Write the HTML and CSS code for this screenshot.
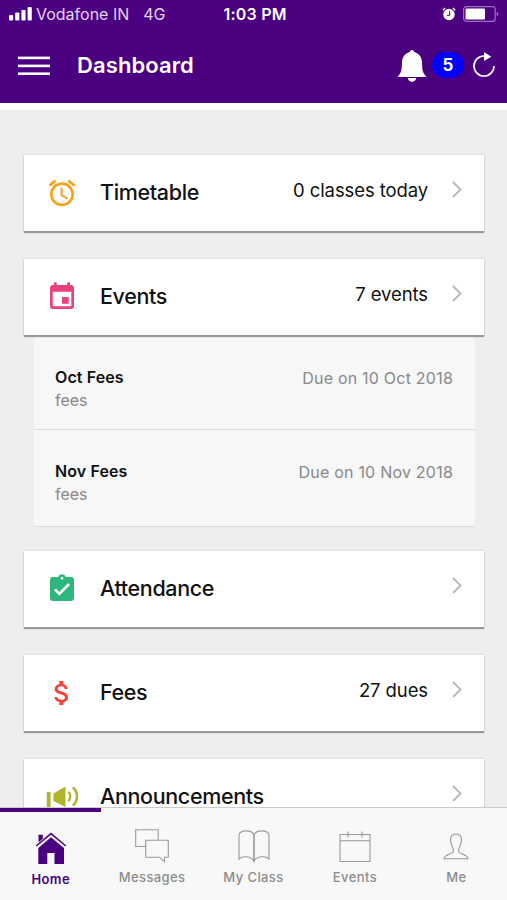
FILE: index.html
```html
<!DOCTYPE html>
<html lang="en">
<head>
  <meta charset="UTF-8">
  <meta name="viewport" content="width=device-width, initial-scale=1.0">
  <title>Dashboard</title>
  <link rel="stylesheet" href="styles.css">
</head>
<body>
  <div class="app">
    <header class="header">
      <div class="status-bar">
        <svg class="signal" viewBox="0 0 23 14" fill="#fff">
          <rect x="0" y="8" width="4.2" height="5.5" rx="1"/>
          <rect x="6.2" y="5.6" width="4.2" height="7.9" rx="1"/>
          <rect x="12.4" y="3" width="4.2" height="10.5" rx="1"/>
          <rect x="18.6" y="0" width="4.2" height="13.5" rx="1"/>
        </svg>
        <span class="carrier">Vodafone IN</span>
        <span class="network">4G</span>
        <span class="time">1:03 PM</span>
        <svg class="alarm" viewBox="0 0 14 14">
          <circle cx="7" cy="7.5" r="5.7" fill="#fff"/>
          <path d="M.8 3.2 3.2 1M13.2 3.2 10.8 1" stroke="#fff" stroke-width="1.4" fill="none"/>
          <path d="M7.6 4.3v4H4.8" stroke="#4b0082" stroke-width="1.1" fill="none"/>
        </svg>
        <svg class="battery" viewBox="0 0 36 16">
          <rect x=".6" y=".6" width="31.6" height="14.8" rx="3" fill="none" stroke="#9a6fbd" stroke-width="1.2"/>
          <rect x="2.5" y="2.5" width="19.5" height="11" rx="1.2" fill="#fff"/>
          <path d="M33.6 5.5Q37 8 33.6 10.5z" fill="#9a6fbd"/>
        </svg>
      </div>
      <div class="toolbar">
        <svg class="menu" viewBox="0 0 32 20" fill="#fff">
          <rect y=".6" width="32" height="2.6"/>
          <rect y="8.6" width="32" height="2.6"/>
          <rect y="16.4" width="32" height="2.6"/>
        </svg>
        <h1>Dashboard</h1>
        <svg class="bell" viewBox="0 0 28 32" fill="#fff">
          <path d="M14 0c1.200 0 1.900.8 2 1.900 5.200 1.300 7.900 5.300 8 10.700.1 7.400.8 10.700 4 13.600v.8H0v-.8c3.200-2.900 3.900-6.200 4-13.600.1-5.400 2.800-9.400 8-10.700.1-1.100.8-1.900 2-1.900z"/>
          <path d="M9.800 28h8.400c-.3 2.200-2 3.700-4.200 3.700S10.100 30.200 9.800 28z"/>
        </svg>
        <span class="badge">5</span>
        <svg class="refresh" viewBox="0 0 22 25">
          <path d="M12.500 4H11A10 10 0 1 0 21 14" fill="none" stroke="#fff" stroke-width="1.7"/>
          <path d="M11 0v9l7.300-4.300z" fill="#fff"/>
        </svg>
      </div>
    </header>

    <main class="content">
      <div class="card">
        <svg class="icon" viewBox="0 0 24 24" fill="#f9a01b">
          <path d="M22 5.720l-4.600-3.860-1.290 1.530 4.600 3.860L22 5.720zM7.880 3.390L6.600 1.860 2 5.710l1.290 1.530 4.590-3.850zM12.500 8H11v6l4.750 2.850.75-1.230-4-2.370V8zM12 4c-4.970 0-9 4.030-9 9s4.020 9 9 9c4.970 0 9-4.030 9-9s-4.030-9-9-9zm0 16c-3.870 0-7-3.130-7-7s3.130-7 7-7 7 3.130 7 7-3.130 7-7 7z"/>
        </svg>
        <h2>Timetable</h2>
        <span class="value">0 classes today</span>
        <svg class="arrow" viewBox="0 0 10 17"><path d="M1 1l7.500 7.500L1 16"/></svg>
      </div>

      <div class="card card-open">
        <svg class="icon" viewBox="0 0 24 24" fill="#ec407a">
          <path d="M17 12h-5v5h5v-5zM16 1v2H8V1H6v2H5c-1.110 0-1.990.9-1.990 2L3 19c0 1.100.89 2 2 2h14c1.100 0 2-.9 2-2V5c0-1.100-.9-2-2-2h-1V1h-2zm3 18H5V8h14v11z"/>
        </svg>
        <h2>Events</h2>
        <span class="value">7 events</span>
        <svg class="arrow" viewBox="0 0 10 17"><path d="M1 1l7.500 7.500L1 16"/></svg>
      </div>
      <ul class="event-list">
        <li>
          <div>
            <h3>Oct Fees</h3>
            <p>fees</p>
          </div>
          <span class="due">Due on 10 Oct 2018</span>
        </li>
        <li>
          <div>
            <h3>Nov Fees</h3>
            <p>fees</p>
          </div>
          <span class="due">Due on 10 Nov 2018</span>
        </li>
      </ul>

      <div class="card">
        <svg class="icon" viewBox="0 0 24 24" fill="#2eb67d">
          <path d="M19 3h-4.180C14.400 1.840 13.300 1 12 1c-1.300 0-2.400.84-2.820 2H5c-1.100 0-2 .9-2 2v14c0 1.100.9 2 2 2h14c1.100 0 2-.9 2-2V5c0-1.100-.9-2-2-2zm-7 0c.55 0 1 .45 1 1s-.45 1-1 1-1-.45-1-1 .45-1 1-1zm-2 14l-4-4 1.410-1.410L10 14.170l6.590-6.590L18 9l-8 8z"/>
        </svg>
        <h2>Attendance</h2>
        <svg class="arrow" viewBox="0 0 10 17"><path d="M1 1l7.500 7.500L1 16"/></svg>
      </div>

      <div class="card">
        <svg class="icon" viewBox="0 0 24 24" fill="#f44336">
          <path d="M11.800 10.900c-2.270-.59-3-1.200-3-2.150 0-1.090 1.010-1.850 2.700-1.850 1.780 0 2.440.85 2.500 2.100h2.210c-.07-1.720-1.120-3.300-3.210-3.810V3h-3v2.160c-1.940.42-3.500 1.680-3.500 3.610 0 2.310 1.910 3.460 4.700 4.130 2.500.6 3 1.480 3 2.410 0 .69-.49 1.790-2.700 1.790-2.060 0-2.870-.92-2.980-2.100h-2.200c.12 2.190 1.760 3.420 3.680 3.830V21h3v-2.150c1.950-.37 3.500-1.500 3.500-3.550 0-2.840-2.430-3.810-4.700-4.400z"/>
        </svg>
        <h2>Fees</h2>
        <span class="value">27 dues</span>
        <svg class="arrow" viewBox="0 0 10 17"><path d="M1 1l7.500 7.500L1 16"/></svg>
      </div>

      <div class="card">
        <svg class="icon" viewBox="0 0 32 32" fill="#afb42b">
          <path d="M.8 11h3.800v18H.8zM7.500 12.500l12-7v20.500l-12-6z"/>
          <path d="M22 11c3 1.500 3 7.500 0 9" fill="none" stroke="#afb42b" stroke-width="2.2"/>
          <path d="M26.800 6.500c5.500 4 5.500 14 0 18" fill="none" stroke="#afb42b" stroke-width="2.5"/>
        </svg>
        <h2>Announcements</h2>
        <svg class="arrow" viewBox="0 0 10 17"><path d="M1 1l7.500 7.500L1 16"/></svg>
      </div>
    </main>

    <nav class="tabs">
      <a class="tab active">
        <svg viewBox="0 0 36 36" fill="#4b0082">
          <path d="M5.500 4.800h4.300v4L5.500 12.300z"/>
          <path d="M18 7.200 31 18V34h-9.500V23h-7.200v11H5.300V18z"/>
          <path d="M3.200 16 18 3.600 32.800 16" fill="none" stroke="#4b0082" stroke-width="1.5"/>
        </svg>
        <span>Home</span>
      </a>
      <a class="tab">
        <svg viewBox="0 0 36 36">
          <path d="M11.500 18.500H1.700V1.800h22.500v10"/>
          <path d="M11.700 12.200h22.600v17h-3.800v4.500l-5-4.500H11.700z"/>
        </svg>
        <span>Messages</span>
      </a>
      <a class="tab">
        <svg viewBox="0 0 36 36">
          <path d="M18 33c-3-5-11-5.500-15-2V7c1-5.500 13-5.500 15 0z"/>
          <path d="M18 33c3-5 11-5.500 15-2V7c-1-5.500-13-5.500-15 0z"/>
        </svg>
        <span>My Class</span>
      </a>
      <a class="tab">
        <svg viewBox="0 0 36 36">
          <path d="M3 6.500h30v27H3zM3 12.800h30M11 3.500v6M25 3.500v6"/>
        </svg>
        <span>Events</span>
      </a>
      <a class="tab">
        <svg viewBox="0 0 36 36">
          <path d="M18 6c-4 0-6 2.500-5.500 7 .3 4 3 6.500 3 9.500 0 4.500-9 3-9.500 8.300h24c-.5-5.300-9.500-3.800-9.500-8.300 0-3 2.700-5.500 3-9.500.5-4.500-1.500-7-5.500-7z"/>
        </svg>
        <span>Me</span>
      </a>
    </nav>
  </div>
</body>
</html>
```

FILE: styles.css
```css
* {
  box-sizing: border-box;
}
body {
  margin: 0;
  font-family: Inter, "Liberation Sans", sans-serif;
  background-color: #eee;
  color: #111;
}
h1, h2, h3, p, ul {
  margin: 0;
  padding: 0;
}
svg {
  display: block;
  flex-shrink: 0;
}
.app {
  display: flex;
  flex-direction: column;
  height: 900px;
  overflow: hidden;
}

/* Header */
.header {
  height: 110px;
  flex-shrink: 0;
  background-color: #4b0082;
  border-bottom: 7px solid #fff;
  color: #fff;
}
.status-bar {
  display: flex;
  align-items: center;
  height: 30px;
  padding: 0 8px 2px 9px;
  font-size: 16px;
}
.signal {
  width: 23px;
  height: 14px;
}
.carrier {
  margin-left: 4px;
  color: #e3d5ee;
}
.network {
  margin-left: 14px;
  color: #e3d5ee;
}
.time {
  margin: 0 auto 0 58px;
  font-weight: 600;
  letter-spacing: 0.2px;
}
.alarm {
  width: 14px;
  height: 14px;
}
.battery {
  width: 36px;
  height: 16px;
  margin-left: 7px;
}
.toolbar {
  display: flex;
  align-items: center;
  height: 70px;
  padding: 0 12px 0 18px;
}
.menu {
  width: 32px;
  height: 20px;
  margin-top: 2px;
}
.toolbar h1 {
  margin: 0 auto 0 27px;
  font-size: 22px;
  font-weight: 600;
  letter-spacing: 0.1px;
}
.bell {
  width: 28px;
  height: 32px;
  margin-top: 2px;
}
.badge {
  width: 32px;
  margin: 0 9px 0 6px;
  border-radius: 13px;
  background-color: #00f;
  font-size: 17px;
  font-weight: 700;
  line-height: 26px;
  text-align: center;
}
.refresh {
  width: 22px;
  height: 25px;
  margin-bottom: 1px;
}

/* Cards */
.content {
  flex: 1;
  min-height: 0;
  overflow: hidden;
  padding: 45px 23px 0 24px;
}
.card {
  display: flex;
  align-items: center;
  height: 76px;
  margin-bottom: 28px;
  padding: 0 22px;
  background-color: #fff;
  box-shadow: 0 2px 1px 0 #999, 0 0 2px 0 #ccc;
}
.card-open {
  position: relative;
  margin-bottom: 0;
}
.icon {
  width: 32px;
  height: 32px;
}
.card h2 {
  margin: 0 auto 2px 22px;
  font-size: 21.5px;
  font-weight: 500;
  letter-spacing: -0.35px;
}
.value {
  margin: 0 24px 6px 0;
  font-size: 18.5px;
  letter-spacing: -0.1px;
}
.arrow {
  width: 10px;
  height: 17px;
  margin-bottom: 8px;
  fill: none;
  stroke: #bbb;
  stroke-width: 2;
}

/* Expanded events */
.event-list {
  margin: 0 9px 24px 10px;
  background-color: #f7f7f7;
  border-bottom: 1px solid #ddd;
  list-style: none;
}
.event-list li {
  display: flex;
  justify-content: space-between;
  height: 97px;
  padding: 30px 22px 0 21px;
  font-size: 16px;
  line-height: 23px;
}
.event-list li:first-child {
  height: 95px;
  padding-top: 31px;
  border-bottom: 1px solid #ddd;
}
.event-list li:last-child {
  margin-bottom: -1px;
}
.event-list h3 {
  font-size: 16px;
  font-weight: 600;
  letter-spacing: 0.1px;
}
.event-list p,
.due {
  color: #888;
}
.due {
  margin-top: 1px;
  letter-spacing: 0.22px;
}

/* Tab bar */
.tabs {
  position: relative;
  display: flex;
  flex-shrink: 0;
  height: 92px;
  background-color: #f8f8f8;
  box-shadow: 0 -1px 0 #ccc;
}
.tab {
  display: flex;
  flex: 1;
  flex-direction: column;
  align-items: center;
  padding-top: 20px;
  color: #8c8c8c;
  font-size: 13px;
  font-weight: 500;
  letter-spacing: 0.4px;
}
.tab svg {
  width: 36px;
  height: 36px;
  margin-bottom: 5px;
  fill: none;
  stroke: #999;
  stroke-width: 1.1;
}
.tab.active {
  padding-top: 18px;
  border-top: 4px solid #4b0082;
  color: #4b0082;
  font-weight: 600;
}
.tab.active svg {
  fill: #4b0082;
  stroke: none;
}
```
